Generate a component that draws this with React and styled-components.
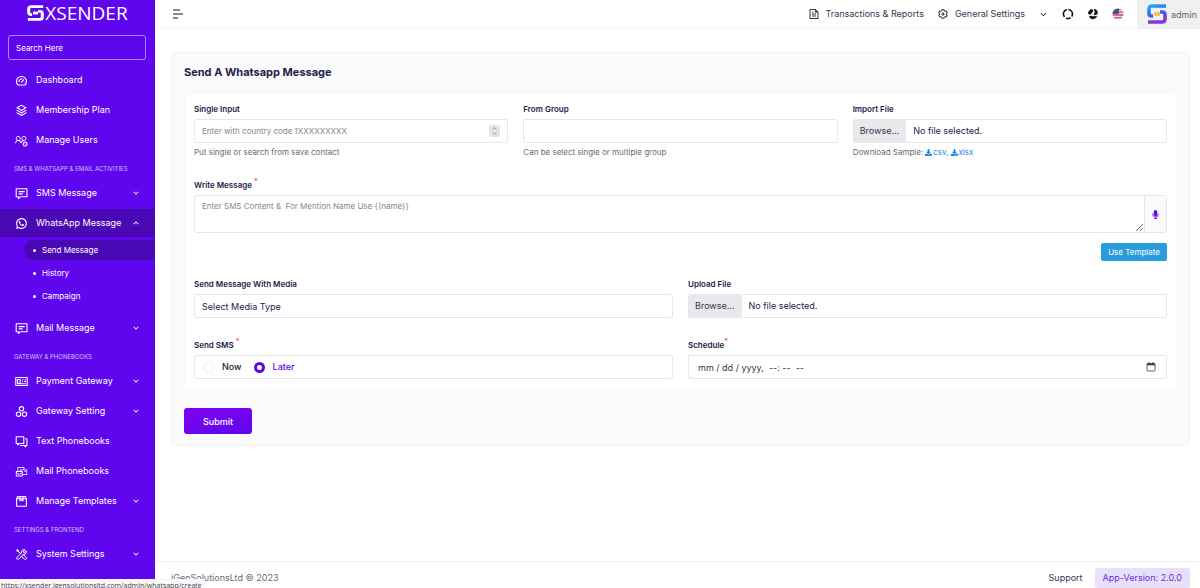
import React, { useState } from "react";
import styled, { createGlobalStyle } from "styled-components";
import {
	RiStackLine,
	RiWhatsappLine,
	RiGlobalLine,
	RiFileTextLine,
	RiSettings3Line,
	RiArrowDownSLine,
	RiArrowUpSLine,
} from "react-icons/ri";
import { LiaUsersCogSolid, LiaMailBulkSolid, LiaToolsSolid } from "react-icons/lia";
import { TbCircles } from "react-icons/tb";
import { FaDownload, FaMicrophone } from "react-icons/fa";

var COLOR = {
	Primary: "#5f06ee",
	Active: "#4a08b4",
	Dark: "#1b2346",
	Text: "#33384f",
	Muted: "#676b78",
	Border: "#e7e6ee",
	Panel: "#fbfafd",
	Blue: "#1c84e8",
	Info: "#299cdb",
	White: "#ffffff",
};

var Global = createGlobalStyle`
	* {
		box-sizing: border-box;
	}
	body {
		margin: 0;
		font-family: Inter, "Liberation Sans", sans-serif;
		font-size: 9px;
		line-height: 12px;
		color: ${COLOR.Text};
		background: ${COLOR.White};
	}
	button,
	input,
	select,
	textarea {
		font-family: inherit;
		font-size: inherit;
		color: inherit;
	}
	ul {
		list-style: none;
		margin: 0;
		padding: 0;
	}
	a {
		text-decoration: none;
		color: inherit;
	}
`;

var Layout = styled.div`
	display: flex;
	height: 100vh;
	overflow: hidden;
`;

/* sidebar */

var Sidebar = styled.aside`
	flex: 0 0 155px;
	overflow: hidden;
	color: ${COLOR.White};
	background: ${COLOR.Primary};
`;

var Brand = styled.a`
	display: flex;
	align-items: center;
	justify-content: center;
	gap: 1px;
	height: 26px;
	font-family: "Open Sans", sans-serif;
	font-size: 19px;
	line-height: 26px;
`;

var Search = styled.input`
	display: block;
	width: calc(100% - 17px);
	height: 25px;
	margin: 9px 9px 6px 8px;
	padding: 0 7px;
	font-size: 8px;
	background: transparent;
	border: 1px solid #a987f6;
	border-radius: 3px;
	&::placeholder {
		color: ${COLOR.White};
		opacity: 1;
	}
`;

var Menu = styled.ul`
	display: flex;
	flex-direction: column;
	gap: 2px;
`;

var MenuTitle = styled.li`
	margin-top: 4px;
	padding-left: 14px;
	font-size: 6px;
	line-height: 17px;
	white-space: nowrap;
	text-transform: uppercase;
	color: #d3c0fb;
`;

var MenuLink = styled.a`
	display: flex;
	align-items: center;
	gap: 8px;
	height: 28px;
	padding: 0 14px 0 15px;
	font-size: 9px;
	white-space: nowrap;
	background: ${({ $active }) => ($active ? COLOR.Active : "transparent")};
	svg {
		flex: none;
	}
	svg:last-child:not(:first-child) {
		margin-left: auto;
	}
`;

var SubMenu = styled.ul`
	display: flex;
	flex-direction: column;
	gap: 3px;
	padding: 3px 0 6px 24px;
`;

var SubLink = styled.a`
	display: flex;
	align-items: center;
	gap: 6px;
	height: 20px;
	padding-left: 9px;
	font-size: 8px;
	border-radius: 10px 0 0 10px;
	background: ${({ $active }) => ($active ? COLOR.Active : "transparent")};
	&::before {
		content: "";
		width: 3px;
		height: 3px;
		border-radius: 50%;
		background: ${COLOR.White};
	}
`;

/* page */

var Page = styled.div`
	flex: 1;
	min-width: 0;
	display: flex;
	flex-direction: column;
`;

var Header = styled.header`
	display: flex;
	align-items: center;
	justify-content: space-between;
	height: 29px;
	padding-left: 17px;
	border-bottom: 1px solid #f8f8fb;
`;

var IconButton = styled.button`
	display: flex;
	padding: 0;
	border: 0;
	background: none;
	cursor: pointer;
	color: ${({ $color }) => $color || "#14151c"};
`;

var Tools = styled.div`
	display: flex;
	align-items: center;
	gap: 13px;
	height: 100%;
`;

var ToolLink = styled.a`
	display: flex;
	align-items: center;
	gap: 6px;
`;

var Profile = styled.button`
	display: flex;
	align-items: center;
	gap: 4px;
	height: 29px;
	padding: 0 3px 0 10px;
	color: #626570;
	background: #f0f0f1;
	border: 0;
`;

var Content = styled.main`
	flex: 1;
	padding: 23px 10px 0 16px;
`;

var Card = styled.form`
	padding: 10px 12px 11px;
	background: ${COLOR.Panel};
	border: 1px solid #f3f2f7;
	border-radius: 4px;
`;

var CardTitle = styled.h1`
	margin: 0 0 12px;
	font-size: 11px;
	line-height: 18px;
	font-weight: 700;
	color: ${COLOR.Dark};
`;

var Panel = styled.div`
	padding: 9px;
	background: ${COLOR.White};
	border: 1px solid #f8f7fb;
	border-radius: 2px;
`;

var Row = styled.div`
	display: grid;
	grid-template-columns: repeat(${({ $cols }) => $cols || 1}, minmax(0, 1fr));
	gap: 15px;
	margin-top: ${({ $top }) => $top || 0}px;
`;

var Field = styled.div`
	display: flex;
	flex-direction: column;
`;

var Label = styled.label`
	display: block;
	margin-bottom: 4px;
	font-size: 8px;
	font-weight: 600;
	color: ${COLOR.Dark};
	sup {
		font-size: 7px;
		line-height: 0;
		color: #f0475c;
	}
`;

var Box = styled.div`
	display: flex;
	align-items: center;
	height: 24px;
	background: ${COLOR.White};
	border: 1px solid ${COLOR.Border};
	border-radius: 2px;
`;

var Input = styled.input`
	flex: 1;
	min-width: 0;
	height: 100%;
	padding: 0 ${({ $pad }) => $pad || 8}px;
	font-size: ${({ $size }) => $size || 8}px;
	border: 0;
	background: transparent;
	&::placeholder {
		color: ${({ $color }) => $color || "#85888f"};
		opacity: 1;
	}
`;

var Stepper = styled(IconButton)`
	margin-right: 7px;
	background: #e6e6e9;
	border-radius: 2px;
	color: #777a83;
`;

var DateButton = styled(IconButton)`
	margin-right: 10px;
`;

var Select = styled.select`
	appearance: none;
	width: 100%;
	height: 24px;
	padding: 0 7px;
	color: ${COLOR.Dark};
	background: ${COLOR.White};
	border: 1px solid ${COLOR.Border};
	border-radius: 2px;
`;

var Help = styled.div`
	display: flex;
	align-items: center;
	gap: 2px;
	margin-top: 3px;
	font-size: 8px;
	color: ${COLOR.Muted};
	a {
		display: inline-flex;
		align-items: center;
		gap: 1px;
		color: ${COLOR.Blue};
	}
`;

var FileBox = styled.label`
	display: flex;
	align-items: center;
	gap: 7px;
	height: 24px;
	overflow: hidden;
	position: relative;
	color: ${COLOR.Dark};
	border: 1px solid ${COLOR.Border};
	border-radius: 2px;
	cursor: pointer;
	input {
		position: absolute;
		inset: 0;
		opacity: 0;
	}
`;

var Browse = styled.span`
	padding: 0 7px 0 6px;
	line-height: 24px;
	color: ${COLOR.Text};
	background: #e9e9ed;
`;

var MessageBox = styled.div`
	display: flex;
	height: 38px;
	border: 1px solid ${COLOR.Border};
	border-radius: 2px;
	textarea {
		flex: 1;
		padding: 4px 7px;
		font-size: 8px;
		line-height: 12px;
		border: 0;
		background: transparent;
		resize: vertical;
		&::placeholder {
			color: #85888f;
		}
	}
`;

var Mic = styled(IconButton)`
	align-items: center;
	justify-content: center;
	width: 22px;
	color: ${COLOR.Primary};
	background: ${COLOR.Panel};
	border-left: 1px solid ${COLOR.Border};
`;

var TemplateButton = styled.button`
	align-self: flex-end;
	height: 18px;
	margin-top: 10px;
	padding: 0 7px;
	font-size: 8px;
	color: ${COLOR.White};
	background: ${COLOR.Info};
	border: 0;
	border-radius: 2px;
`;

var Radio = styled.label`
	display: flex;
	align-items: center;
	gap: 8px;
	margin-left: 8px;
	margin-right: 4px;
	font-weight: 500;
	color: #20222c;
	input {
		appearance: none;
		width: 11px;
		height: 11px;
		margin: 0;
		border: 1px solid #eeedf2;
		border-radius: 50%;
	}
	input:checked {
		border: 3px solid ${COLOR.Primary};
	}
	input:checked + span {
		color: ${COLOR.Primary};
	}
`;

var Submit = styled.button`
	display: block;
	height: 26px;
	margin-top: 19px;
	padding: 0 19px;
	font-weight: 500;
	color: ${COLOR.White};
	background: linear-gradient(170deg, #8003f0, ${COLOR.Primary});
	border: 0;
	border-radius: 3px;
`;

var Footer = styled.footer`
	display: flex;
	align-items: center;
	justify-content: space-between;
	height: 27px;
	padding: 6px 10px 0 16px;
	border-top: 1px solid #ededf2;
	color: ${COLOR.Muted};
`;

var FooterLinks = styled.div`
	display: flex;
	align-items: center;
	gap: 12px;
	color: ${COLOR.Text};
`;

var Version = styled.span`
	padding: 0 8px;
	line-height: 20px;
	border-radius: 3px;
	color: #6a2bea;
	background: #e8e0f9;
`;

/* link address shown over the bottom left corner */
var Status = styled.div`
	position: fixed;
	left: 0;
	bottom: 0;
	height: 9px;
	padding: 0 3px 0 1px;
	overflow: hidden;
	font-family: "Open Sans", "Noto Sans", sans-serif;
	font-size: 7px;
	line-height: 14px;
	white-space: nowrap;
	color: #3e3e42;
	background: #f9f9fb;
`;

function LogoMark({ id, width, height, colors }) {
	return (
		<svg width={width} height={height} viewBox="0 0 20 20" preserveAspectRatio="none" fill="none">
			<defs>
				<linearGradient id={id} x1="0" y1="0" x2="0.4" y2="1">
					<stop offset="0" stopColor={colors[0]} />
					<stop offset="0.5" stopColor={colors[1]} />
					<stop offset="1" stopColor={colors[2]} />
				</linearGradient>
			</defs>
			<path
				d="M19 2H5C3 2 2 3 2 5v4.500c0 1.500 1 2.500 3 2.500h1M1 18h14c2 0 3-1 3-3v-4.500C18 9 17 8 15 8h-2"
				stroke={`url(#${id})`}
				strokeWidth="3.600"
			/>
			<path d="M7 10h6" stroke={colors[3]} strokeWidth="3.600" />
		</svg>
	);
}

function Burger() {
	return (
		<svg width="12" height="10" viewBox="0 0 12 10" stroke="currentColor" strokeWidth="1.200">
			<path d="M1 1h7M1 5h10M1 9h5" />
		</svg>
	);
}

function Fullscreen() {
	return (
		<svg width="12" height="12" viewBox="0 0 12 12" fill="none" stroke="currentColor" strokeWidth="1.600">
			<path d="M4.800 1.600A4.500 4.500 0 0 0 2.500 8.900M4 10.100A4.500 4.500 0 0 0 8.600 9.700M9.700 8.500A4.500 4.500 0 0 0 6.300 1.500" />
		</svg>
	);
}

function Globe() {
	return (
		<svg width="12" height="12" viewBox="0 0 12 12" fill="currentColor">
			<path d="M4.500 1C2.400 1.600 1 3.500 1 5.800l1.800 1 1.500-.6.600-1.700 1.500-.8L6 2z" />
			<path d="M7.300.8L7 2.800l1.200 1.300-1.600 1.400.4 1.300 2.300.3L11 5.300C10.900 3 9.400 1.200 7.300.8z" />
			<path d="M2 8.300l2.400-.5 1.700.8 1-.9 2.400.7 1.200-.8c-.7 2-2.600 3.600-4.700 3.600-1.700 0-3.200-1.100-4-2.900z" />
		</svg>
	);
}

function Flag() {
	return (
		<svg width="12" height="12" viewBox="0 0 12 12">
			<clipPath id="flag">
				<circle cx="6" cy="6" r="5.500" />
			</clipPath>
			<g clipPath="url(#flag)">
				<path d="M0 0h12v12H0z" fill="#f1dfe2" />
				<path d="M0 1.400h12M0 4.200h12M0 7h12M0 9.800h12" stroke="#d0495b" strokeWidth="1.300" />
				<path d="M0 0h7v6H0z" fill="#43558f" />
			</g>
		</svg>
	);
}

function Calendar() {
	return (
		<svg width="10" height="10" viewBox="0 0 10 10" fill="none" stroke="currentColor">
			<rect x="1" y="1.500" width="8" height="7.500" rx="1" strokeWidth="0.800" />
			<path d="M1 2.500h8" strokeWidth="1.600" />
			<path d="M3 0v2M7 0v2" />
		</svg>
	);
}

function Updown() {
	return (
		<svg width="11" height="12" viewBox="0 0 11 12" fill="none" stroke="currentColor" strokeWidth="0.800">
			<path d="M3.500 4.500l2-2 2 2M3.500 7.500l2 2 2-2" />
		</svg>
	);
}

/* sidebar icons, all on a 13px grid */

var Glyph = styled.svg.attrs({ width: 13, height: 13, viewBox: "0 0 13 13" })`
	fill: none;
	stroke: currentColor;
	stroke-width: 1.1;
	stroke-linejoin: round;
`;

function Gauge() {
	return (
		<Glyph>
			<path d="M3 11a5 5 0 1 1 7 0z" />
			<path d="M4 8a2.500 2.500 0 0 1 3.500-2.700M6.200 8.600l2.900-3.200M9 8.500h.5" />
		</Glyph>
	);
}

function Message() {
	return (
		<Glyph>
			<path d="M1.200 1.800h10.800v8H5.200l-1.800 1.700V9.800H1.200z" />
			<path d="M3.700 4.600h6M3.700 6.900h4" />
		</Glyph>
	);
}

function Payment() {
	return (
		<Glyph>
			<path d="M.8 2.500h11.400v8H.8z" />
			<path d="M2.500 4.500h2.700v3.800H2.500zM7 4.700h1.400M9.600 4.700h1.400M7 6.500h1M9.200 6.500H11M2 8.800h9" />
		</Glyph>
	);
}

function Chats() {
	return (
		<Glyph>
			<path d="M1.200 1.800h7.600v6.700H4.200L2.800 9.800V8.500H1.200z" />
			<path d="M10.200 3.800h1.700v6.700h-1.200v1.400l-1.500-1.400H5" />
		</Glyph>
	);
}

function Template() {
	return (
		<Glyph>
			<path d="M1.600 3.800h9.800v7.400H1.600zM1.600 3.800l1-2.200h7.800l1 2.200" />
			<path d="M5 1.600v4.200l1.500-.8 1.500.8V1.600" />
		</Glyph>
	);
}

var MENU = [
	{ text: "Dashboard", icon: Gauge },
	{ text: "Membership Plan", icon: RiStackLine },
	{ text: "Manage Users", icon: LiaUsersCogSolid },
	{ title: "SMS & WhatsApp & Email Activities" },
	{ text: "SMS Message", icon: Message, more: true },
	{ text: "WhatsApp Message", icon: RiWhatsappLine, more: true, sub: ["Send Message", "History", "Campaign"] },
	{ text: "Mail Message", icon: Message, more: true },
	{ title: "Gateway & Phonebooks" },
	{ text: "Payment Gateway", icon: Payment, more: true },
	{ text: "Gateway Setting", icon: TbCircles, more: true },
	{ text: "Text Phonebooks", icon: Chats },
	{ text: "Mail Phonebooks", icon: LiaMailBulkSolid },
	{ text: "Manage Templates", icon: Template, more: true },
	{ title: "Settings & Frontend" },
	{ text: "System Settings", icon: LiaToolsSolid, more: true },
	{ icon: RiGlobalLine },
];

function MenuItem({ item }) {
	const Icon = item.icon;
	const Arrow = item.sub ? RiArrowUpSLine : RiArrowDownSLine;
	return (
		<li>
			<MenuLink href="#" $active={!!item.sub} aria-label={item.text || "Frontend"}>
				<Icon size={13} />
				{item.text}
				{item.more && <Arrow size={10} />}
			</MenuLink>
			{item.sub && (
				<SubMenu>
					{item.sub.map((text, i) => (
						<li key={text}>
							<SubLink href="#" $active={i === 0}>
								{text}
							</SubLink>
						</li>
					))}
				</SubMenu>
			)}
		</li>
	);
}

function FileField({ id, label, children }) {
	return (
		<Field>
			<Label htmlFor={id}>{label}</Label>
			<FileBox>
				<input type="file" id={id} />
				<Browse>Browse...</Browse>
				<span>No file selected.</span>
			</FileBox>
			{children}
		</Field>
	);
}

export default function App() {
	const [when, setWhen] = useState("later");
	return (
		<>
			<Global />
			<Layout>
				<Sidebar>
					<Brand href="#">
						<LogoMark id="brand" width={17} height={16} colors={["#fff", "#fff", "#fff", "#fff"]} />
						XSENDER
					</Brand>
					<Search placeholder="Search Here" aria-label="Search" />
					<nav>
						<Menu>
							{MENU.map((item, i) =>
								item.title ? <MenuTitle key={i}>{item.title}</MenuTitle> : <MenuItem key={i} item={item} />
							)}
						</Menu>
					</nav>
				</Sidebar>

				<Page>
					<Header>
						<IconButton aria-label="Toggle menu">
							<Burger />
						</IconButton>
						<Tools>
							<ToolLink href="#">
								<RiFileTextLine size={12} />
								Transactions & Reports
							</ToolLink>
							<ToolLink href="#">
								<RiSettings3Line size={12} />
								General Settings
							</ToolLink>
							<IconButton aria-label="More settings" $color={COLOR.Text}>
								<RiArrowDownSLine size={11} />
							</IconButton>
							<IconButton aria-label="Fullscreen">
								<Fullscreen />
							</IconButton>
							<IconButton aria-label="Visit site">
								<Globe />
							</IconButton>
							<IconButton aria-label="Language">
								<Flag />
							</IconButton>
							<Profile>
								<LogoMark id="avatar" width={20} height={20} colors={["#1fb0f5", "#2b6ff0", "#8a35d8", "#f6c04c"]} />
								admin
							</Profile>
						</Tools>
					</Header>

					<Content>
						<Card onSubmit={(e) => e.preventDefault()}>
							<CardTitle>Send A Whatsapp Message</CardTitle>
							<Panel>
								<Row $cols={3}>
									<Field>
										<Label htmlFor="number">Single Input</Label>
										<Box>
											<Input id="number" $pad={7} placeholder="Enter with country code 1XXXXXXXXX" />
											<Stepper type="button" aria-label="Step">
												<Updown />
											</Stepper>
										</Box>
										<Help>Put single or search from save contact</Help>
									</Field>
									<Field>
										<Label htmlFor="group">From Group</Label>
										<Box>
											<Input id="group" />
										</Box>
										<Help>Can be select single or multiple group</Help>
									</Field>
									<FileField id="import" label="Import File">
										<Help>
											Download Sample:
											<a href="#">
												<FaDownload size={7} /> csv,
											</a>
											<a href="#">
												<FaDownload size={7} /> xlsx
											</a>
										</Help>
									</FileField>
								</Row>

								<Row $top={21}>
									<Field>
										<Label htmlFor="message">
											Write Message <sup>*</sup>
										</Label>
										<MessageBox>
											<textarea id="message" placeholder={"Enter SMS Content &  For Mention Name Use {{name}}"} />
											<Mic type="button" aria-label="Record">
												<FaMicrophone size={9} />
											</Mic>
										</MessageBox>
										<TemplateButton type="button">Use Template</TemplateButton>
									</Field>
								</Row>

								<Row $cols={2} $top={17}>
									<Field>
										<Label htmlFor="media">Send Message With Media</Label>
										<Select id="media">
											<option>Select Media Type</option>
										</Select>
									</Field>
									<FileField id="upload" label="Upload File" />
								</Row>

								<Row $cols={2} $top={21}>
									<Field role="radiogroup" aria-labelledby="when">
										<Label as="div" id="when">
											Send SMS <sup>*</sup>
										</Label>
										<Box>
											<Radio>
												<input type="radio" name="when" checked={when === "now"} onChange={() => setWhen("now")} />
												<span>Now</span>
											</Radio>
											<Radio>
												<input type="radio" name="when" checked={when === "later"} onChange={() => setWhen("later")} />
												<span>Later</span>
											</Radio>
										</Box>
									</Field>
									<Field>
										<Label htmlFor="date">
											Schedule<sup>*</sup>
										</Label>
										<Box>
											<Input id="date" $size={9} $pad={9} $color={COLOR.Text} placeholder="mm / dd / yyyy,  --: --  --" />
											<DateButton type="button" aria-label="Pick a date" $color={COLOR.Text}>
												<Calendar />
											</DateButton>
										</Box>
									</Field>
								</Row>
							</Panel>
							<Submit>Submit</Submit>
						</Card>
					</Content>

					<Footer>
						<span>iGenSolutionsLtd © 2023</span>
						<FooterLinks>
							<a href="#">Support</a>
							<Version>App-Version: 2.0.0</Version>
						</FooterLinks>
					</Footer>
				</Page>
			</Layout>
			<Status>https://xsender.igensolutionsltd.com/admin/whatsapp/create</Status>
		</>
	);
}
